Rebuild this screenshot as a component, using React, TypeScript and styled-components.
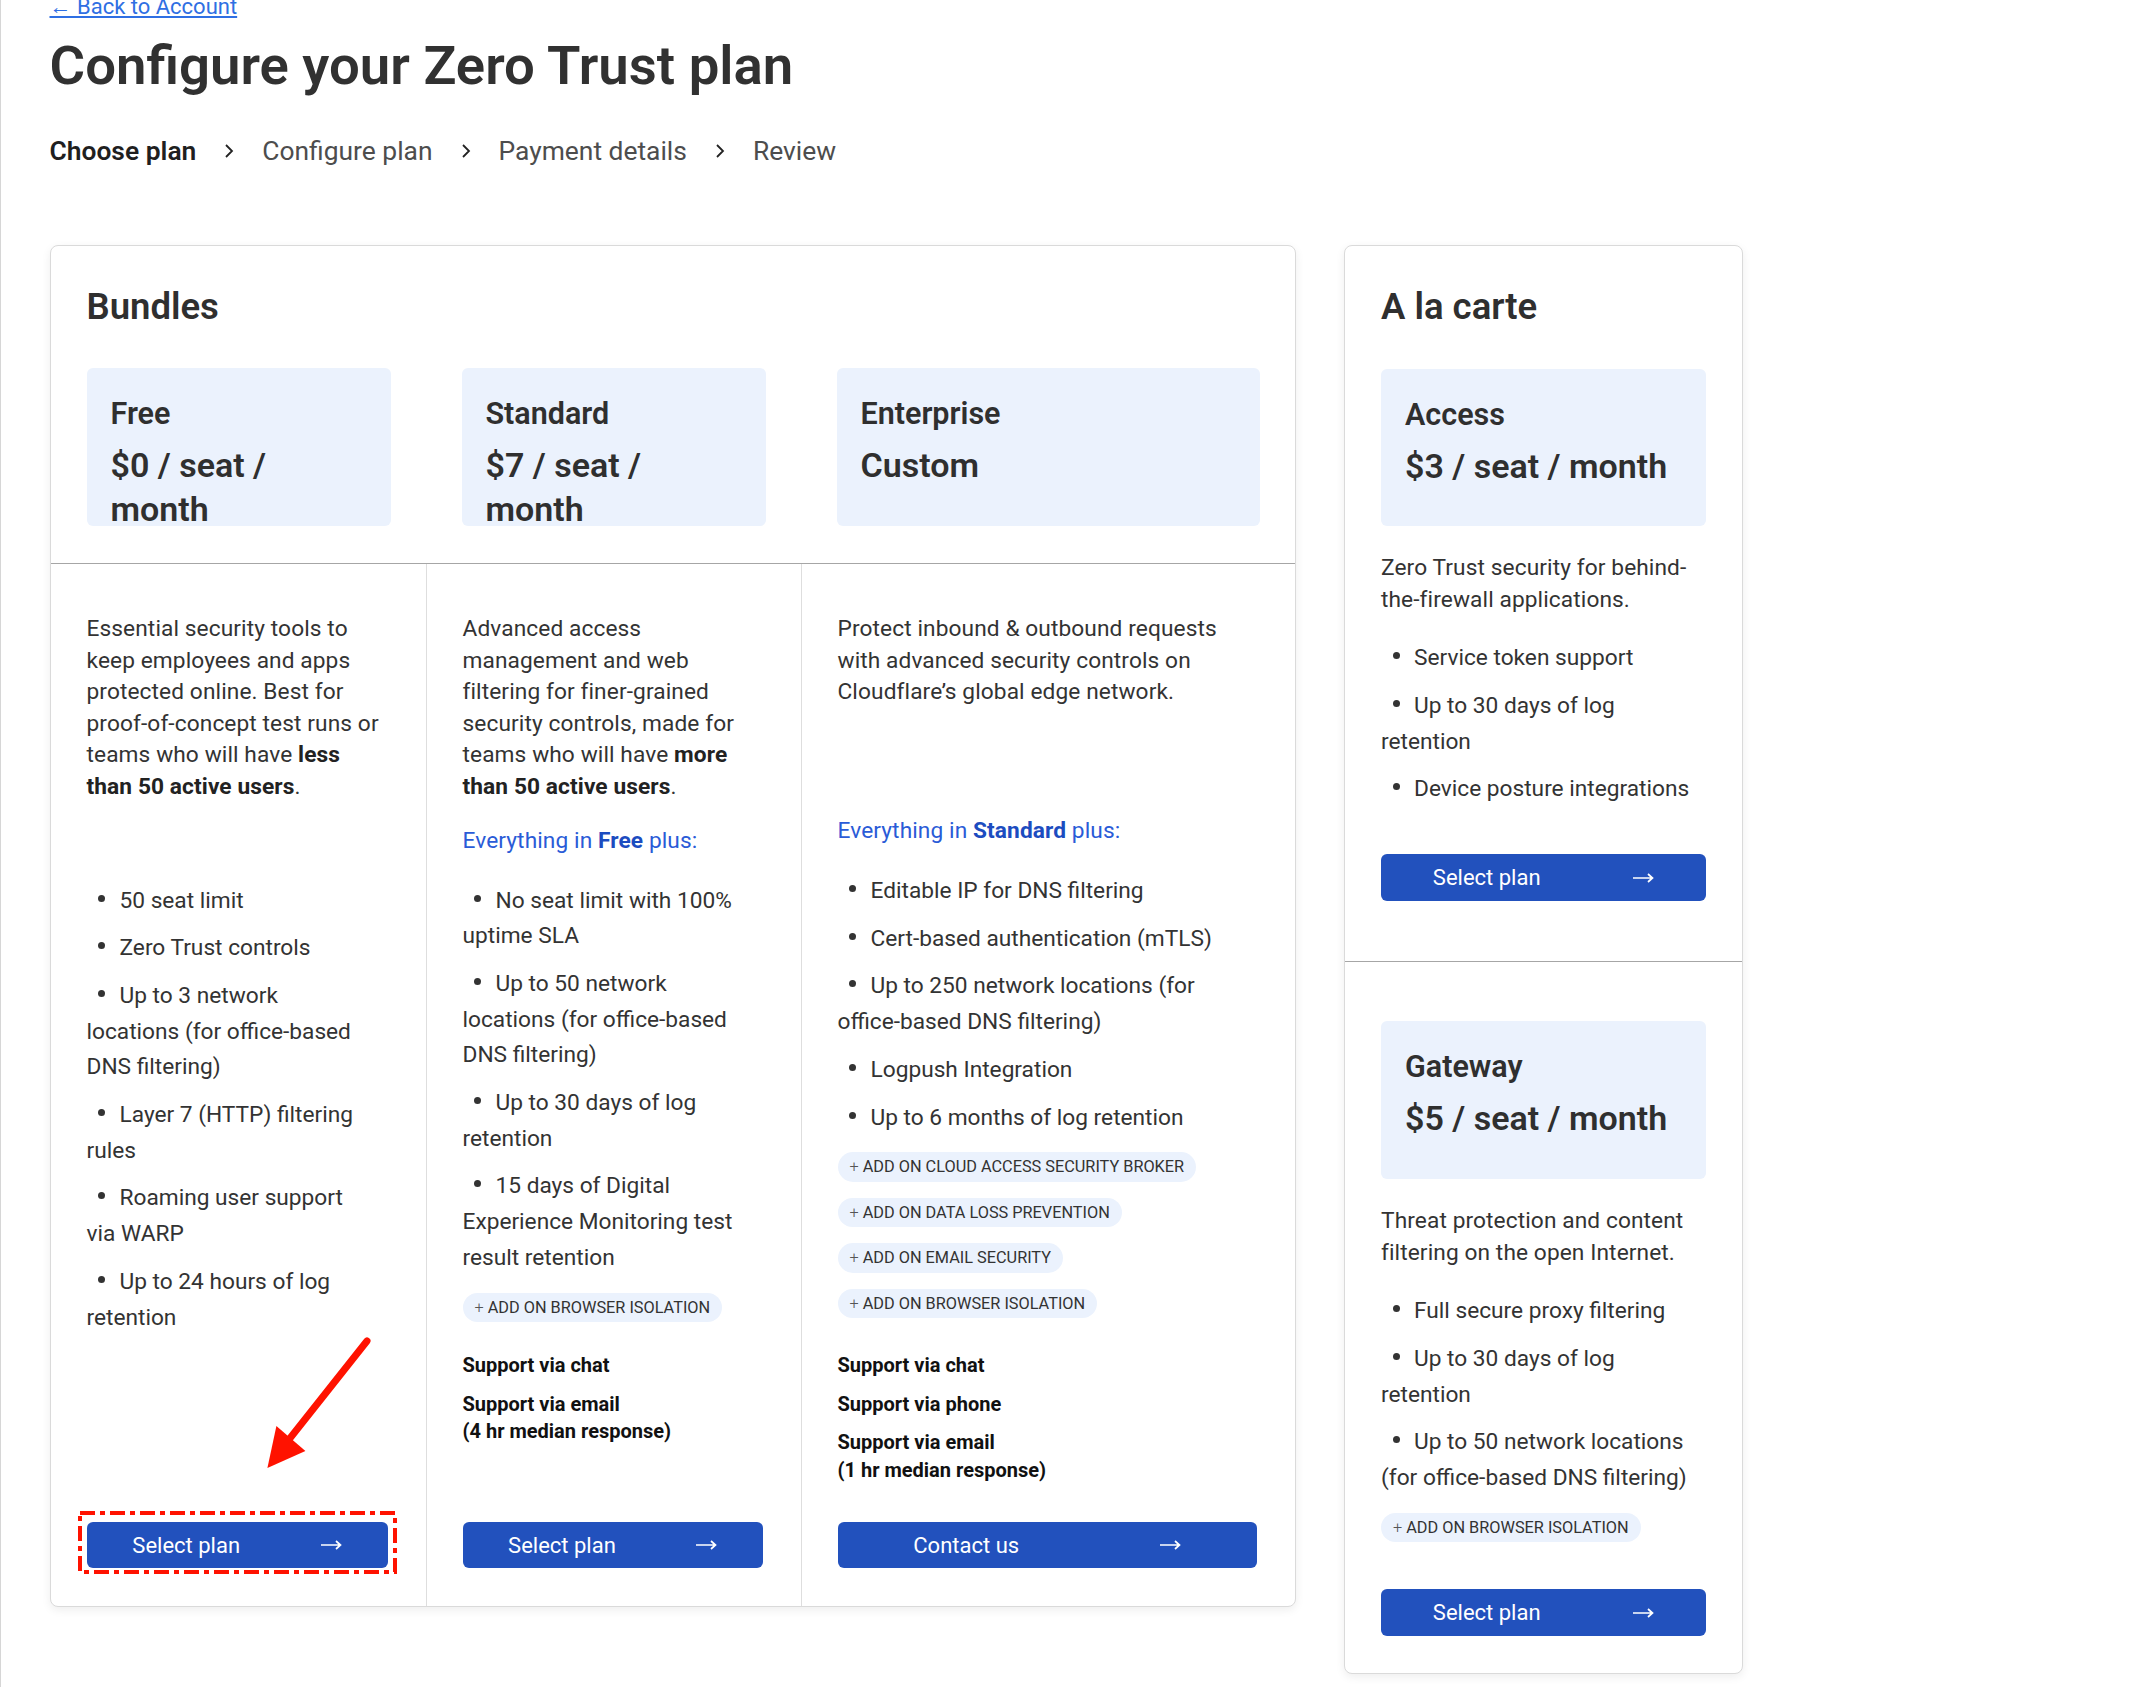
import React from "react";
import styled, { createGlobalStyle } from "styled-components";

const FONT = `Roboto, "Segoe UI", "Open Sans", Arial, sans-serif`;

const GlobalStyle = createGlobalStyle`
  *, *::before, *::after { box-sizing: border-box; }
  html, body { margin: 0; padding: 0; background: #ffffff; }
  body { font-family: ${FONT}; color: #333333; }
`;

const Page = styled.div`
  min-height: 1687px;
  border-left: 1px solid #d6d6d6;
  padding-left: 48.5px;
  padding-bottom: 40px;
`;

const BackRow = styled.div`
  margin-top: -6px;
  height: 26px;
  line-height: 26px;
`;

const BackLink = styled.a`
  font-size: 22px;
  color: #2f6fe3;
  text-decoration: underline;
  text-underline-offset: 2px;
`;

const Title = styled.h1`
  margin: 13px 0 0;
  font-size: 54.5px;
  line-height: 64px;
  font-weight: 600;
  color: #313131;
`;

const Crumbs = styled.nav`
  display: flex;
  align-items: center;
  gap: 28px;
  margin-top: 37px;
  height: 34px;
  font-size: 26.4px;
  line-height: 34px;
`;

const Crumb = styled.span<{ $active?: boolean }>`
  color: ${(p) => (p.$active ? "#1f1f1f" : "#4d4d4d")};
  font-weight: ${(p) => (p.$active ? 600 : 400)};
`;

const Chevron = () => (
  <svg width="10" height="16" viewBox="0 0 10 16" aria-hidden>
    <polyline points="2,2 8,8 2,14" fill="none" stroke="#222" strokeWidth="1.8" />
  </svg>
);

const Cards = styled.div`
  display: flex;
  align-items: flex-start;
  gap: 48.5px;
  margin-top: 77px;
`;

const Card = styled.section<{ $width: number }>`
  width: ${(p) => p.$width}px;
  border: 1px solid #dadada;
  border-radius: 8px;
  background: #fff;
  box-shadow: 0 3px 10px rgba(0, 0, 0, 0.07);
`;

const CardTitle = styled.h2`
  margin: 0 0 39.5px;
  font-size: 36.5px;
  line-height: 44px;
  font-weight: 600;
  color: #2f2f2f;
`;

const BundlesHead = styled.div`
  padding: 38.5px 0 37px;
  border-bottom: 1px solid #a6a6a6;
`;

const HeadTitle = styled(CardTitle)`
  padding-left: 36px;
`;

const Grid3 = styled.div`
  display: grid;
  grid-template-columns: 375px 375px 1fr;
`;

const HeadCell = styled.div`
  padding: 0 35px 0 36px;
`;

const PlanBox = styled.div<{ $h: number }>`
  height: ${(p) => p.$h}px;
  padding: 27px 24px 0;
  background: #ebf2fd;
  border-radius: 6px;
`;

const PlanName = styled.div`
  font-size: 30.5px;
  line-height: 38px;
  font-weight: 600;
  color: #2f2f2f;
`;

const PlanPrice = styled.div`
  margin-top: 10px;
  font-size: 34px;
  line-height: 44px;
  font-weight: 600;
  color: #2f2f2f;
`;

const Column = styled.div<{ $first?: boolean }>`
  display: flex;
  flex-direction: column;
  padding: 49px 38px 38px 36px;
  border-left: ${(p) => (p.$first ? "none" : "1px solid #dedede")};
`;

const TopArea = styled.div`
  min-height: 739px;
`;

const Description = styled.p<{ $min?: number; $top?: number }>`
  margin: ${(p) => p.$top ?? 0}px 0 0;
  min-height: ${(p) => p.$min ?? 0}px;
  font-size: 22.7px;
  letter-spacing: 0.1px;
  line-height: 31.6px;
  color: #333;

  b {
    font-weight: 700;
    color: #222;
  }
`;

const Intro = styled.p<{ $hidden?: boolean }>`
  margin: 22px 0 0;
  font-size: 22.7px;
  letter-spacing: 0.1px;
  line-height: 31.6px;
  color: #2a5bd7;
  visibility: ${(p) => (p.$hidden ? "hidden" : "visible")};

  b {
    font-weight: 700;
    color: #1c4cc0;
  }
`;

const FeatureList = styled.ul<{ $top: number }>`
  margin: ${(p) => p.$top}px 0 0;
  padding: 0 14px 0 0;
  list-style: none;
`;

const Feature = styled.li`
  font-size: 22.7px;
  line-height: 35.7px;
  color: #333;

  & + & {
    margin-top: 12px;
  }

  &::before {
    content: "";
    display: inline-block;
    width: 7px;
    height: 7px;
    border-radius: 50%;
    background: #333;
    margin: 0 14.5px 0 11.5px;
    vertical-align: 6px;
  }
`;

const AddOns = styled.div`
  display: flex;
  flex-direction: column;
  align-items: flex-start;
  gap: 16px;
  margin-top: 17px;
`;

const Chip = styled.span`
  display: inline-flex;
  align-items: center;
  height: 29.5px;
  padding: 0 12px;
  border-radius: 15px;
  background: #ebf2fd;
  font-size: 16.3px;
  color: #333;
  white-space: nowrap;
`;

const Plus = styled.span`
  margin-right: 4px;
  color: #555;
  font-weight: 300;
`;

const SupportList = styled.div`
  margin-bottom: 38px;
`;

const SupportItem = styled.div`
  font-size: 20px;
  line-height: 27.5px;
  font-weight: 700;
  color: #111;

  & + & {
    margin-top: 11px;
  }
`;

const ButtonSlot = styled.div<{ $top?: string }>`
  position: relative;
  margin-top: ${(p) => p.$top ?? "auto"};
`;

const ActionButton = styled.button<{ $h?: number }>`
  display: flex;
  width: 100%;
  height: ${(p) => p.$h ?? 46}px;
  align-items: center;
  justify-content: space-around;
  border: none;
  border-radius: 6px;
  background: #2251bd;
  color: #fff;
  font-family: ${FONT};
  font-size: 22px;
  cursor: pointer;
`;

const Arrow = () => (
  <svg width="22" height="12" viewBox="0 0 22 12" aria-hidden>
    <path d="M1 6H20.5M16 2L20.5 6L16 10" fill="none" stroke="#fff" strokeWidth="1.7" />
  </svg>
);

const Callout = styled.svg`
  position: absolute;
  left: -8.6px;
  top: -11px;
  overflow: visible;
  pointer-events: none;
`;

const Pointer = styled.svg`
  position: absolute;
  left: 170px;
  top: -190px;
  overflow: visible;
  pointer-events: none;
`;

const Section = styled.div<{ $pt: number; $pb: number; $divider?: boolean }>`
  display: flex;
  flex-direction: column;
  padding: ${(p) => p.$pt}px 36px ${(p) => p.$pb}px;
  border-top: ${(p) => (p.$divider ? "1px solid #a6a6a6" : "none")};
`;

const SideTitle = styled(CardTitle)`
  margin-bottom: 40.5px;
`;

type Bundle = {
  name: string;
  price: string;
  desc: React.ReactNode;
  base?: string;
  features: string[];
  addons: string[];
  support: string[][];
  cta: string;
  marked?: boolean;
};

const bundles: Bundle[] = [
  {
    name: "Free",
    price: "$0 / seat / month",
    desc: (
      <>
        Essential security tools to keep employees and apps protected online. Best for proof-of-concept test runs or
        teams who will have <b>less than 50 active users</b>.
      </>
    ),
    features: [
      "50 seat limit",
      "Zero Trust controls",
      "Up to 3 network locations (for office-based DNS filtering)",
      "Layer 7 (HTTP) filtering rules",
      "Roaming user support via WARP",
      "Up to 24 hours of log retention",
    ],
    addons: [],
    support: [],
    cta: "Select plan",
    marked: true,
  },
  {
    name: "Standard",
    price: "$7 / seat / month",
    desc: (
      <>
        Advanced access management and web filtering for finer-grained security controls, made for teams who will have{" "}
        <b>more than 50 active users</b>.
      </>
    ),
    base: "Free",
    features: [
      "No seat limit with 100% uptime SLA",
      "Up to 50 network locations (for office-based DNS filtering)",
      "Up to 30 days of log retention",
      "15 days of Digital Experience Monitoring test result retention",
    ],
    addons: ["BROWSER ISOLATION"],
    support: [["Support via chat"], ["Support via email", "(4 hr median response)"]],
    cta: "Select plan",
  },
  {
    name: "Enterprise",
    price: "Custom",
    desc: <>Protect inbound &amp; outbound requests with advanced security controls on Cloudflare’s global edge network.</>,
    base: "Standard",
    features: [
      "Editable IP for DNS filtering",
      "Cert-based authentication (mTLS)",
      "Up to 250 network locations (for office-based DNS filtering)",
      "Logpush Integration",
      "Up to 6 months of log retention",
    ],
    addons: ["CLOUD ACCESS SECURITY BROKER", "DATA LOSS PREVENTION", "EMAIL SECURITY", "BROWSER ISOLATION"],
    support: [["Support via chat"], ["Support via phone"], ["Support via email", "(1 hr median response)"]],
    cta: "Contact us",
  },
];

const AddOnChips = ({ items }: { items: string[] }) =>
  items.length ? (
    <AddOns>
      {items.map((a) => (
        <Chip key={a}>
          <Plus>+</Plus>ADD ON {a}
        </Chip>
      ))}
    </AddOns>
  ) : null;

const Annotation = () => (
  <>
    <Callout width="319" height="63" viewBox="0 0 319 63" aria-hidden>
      <rect
        x="2"
        y="2"
        width="315"
        height="59"
        fill="none"
        stroke="#ff1200"
        strokeWidth="4"
        strokeDasharray="15 5 5 5"
      />
    </Callout>
    <Pointer width="120" height="145" viewBox="0 0 120 145" aria-hidden>
      <line x1="110" y1="9" x2="30" y2="110" stroke="#ff1200" strokeWidth="7" strokeLinecap="round" />
      <polygon points="10.4,136 19.4,94 48.4,119" fill="#ff1200" />
    </Pointer>
  </>
);

export default function App() {
  return (
    <>
      <GlobalStyle />
      <Page>
        <BackRow>
          <BackLink href="#">← Back to Account</BackLink>
        </BackRow>
        <Title>Configure your Zero Trust plan</Title>
        <Crumbs>
          <Crumb $active>Choose plan</Crumb>
          <Chevron />
          <Crumb>Configure plan</Crumb>
          <Chevron />
          <Crumb>Payment details</Crumb>
          <Chevron />
          <Crumb>Review</Crumb>
        </Crumbs>

        <Cards>
          <Card $width={1246}>
            <BundlesHead>
              <HeadTitle>Bundles</HeadTitle>
              <Grid3>
                {bundles.map((b) => (
                  <HeadCell key={b.name}>
                    <PlanBox $h={158}>
                      <PlanName>{b.name}</PlanName>
                      <PlanPrice>{b.price}</PlanPrice>
                    </PlanBox>
                  </HeadCell>
                ))}
              </Grid3>
            </BundlesHead>
            <Grid3>
              {bundles.map((b, i) => (
                <Column key={b.name} $first={i === 0}>
                  <TopArea>
                    <Description $min={180}>{b.desc}</Description>
                    <Intro $hidden={!b.base}>
                      Everything in <b>{b.base ?? "Free"}</b> plus:
                    </Intro>
                    <FeatureList $top={26.4}>
                      {b.features.map((f) => (
                        <Feature key={f}>{f}</Feature>
                      ))}
                    </FeatureList>
                    <AddOnChips items={b.addons} />
                  </TopArea>
                  {b.support.length > 0 && (
                    <SupportList>
                      {b.support.map((s) => (
                        <SupportItem key={s[0]}>
                          {s.map((line) => (
                            <div key={line}>{line}</div>
                          ))}
                        </SupportItem>
                      ))}
                    </SupportList>
                  )}
                  <ButtonSlot>
                    <ActionButton>
                      <span>{b.cta}</span>
                      <Arrow />
                    </ActionButton>
                    {b.marked && <Annotation />}
                  </ButtonSlot>
                </Column>
              ))}
            </Grid3>
          </Card>

          <Card $width={399}>
            <Section $pt={38.5} $pb={60}>
              <SideTitle>A la carte</SideTitle>
              <PlanBox $h={157}>
                <PlanName>Access</PlanName>
                <PlanPrice>$3 / seat / month</PlanPrice>
              </PlanBox>
              <Description $top={26}>Zero Trust security for behind-the-firewall applications.</Description>
              <FeatureList $top={25}>
                <Feature>Service token support</Feature>
                <Feature>Up to 30 days of log retention</Feature>
                <Feature>Device posture integrations</Feature>
              </FeatureList>
              <ButtonSlot $top="47px">
                <ActionButton $h={47}>
                  <span>Select plan</span>
                  <Arrow />
                </ActionButton>
              </ButtonSlot>
            </Section>
            <Section $pt={59} $pb={37} $divider>
              <PlanBox $h={158}>
                <PlanName>Gateway</PlanName>
                <PlanPrice>$5 / seat / month</PlanPrice>
              </PlanBox>
              <Description $top={26}>Threat protection and content filtering on the open Internet.</Description>
              <FeatureList $top={25}>
                <Feature>Full secure proxy filtering</Feature>
                <Feature>Up to 30 days of log retention</Feature>
                <Feature>Up to 50 network locations (for office-based DNS filtering)</Feature>
              </FeatureList>
              <AddOnChips items={["BROWSER ISOLATION"]} />
              <ButtonSlot $top="47px">
                <ActionButton $h={47}>
                  <span>Select plan</span>
                  <Arrow />
                </ActionButton>
              </ButtonSlot>
            </Section>
          </Card>
        </Cards>
      </Page>
    </>
  );
}
